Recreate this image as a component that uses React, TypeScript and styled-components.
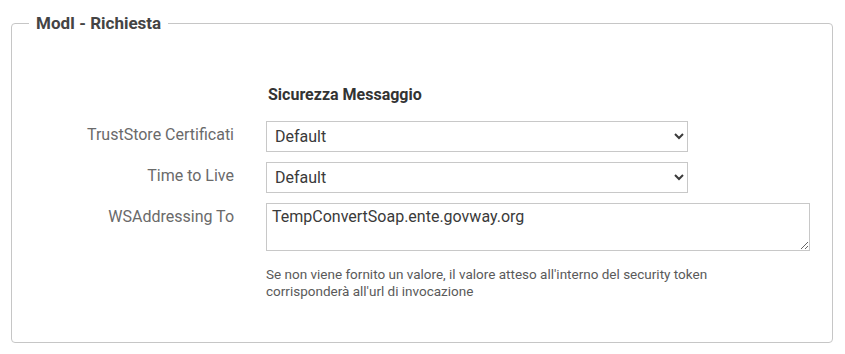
import React from "react";
import styled, { createGlobalStyle } from "styled-components";

const Global = createGlobalStyle`
  html, body { margin: 0; padding: 0; background: #fff; }
  body { font-family: Roboto, "Noto Sans", Arial, sans-serif; }
`;

const Page = styled.div`
  padding: 14px 12px 0 11px;
  width: 822px;
`;

const Fieldset = styled.fieldset`
  margin: 0;
  border: 1px solid #c6c6c6;
  border-radius: 4px;
  padding: 0 0 42px 0;
  min-width: 0;
`;

const Legend = styled.legend`
  margin-left: 17px;
  padding: 0 7px;
  font-size: 17px;
  font-weight: 700;
  color: #444;
  line-height: 18px;
`;

const Grid = styled.div`
  display: grid;
  grid-template-columns: 222px 1fr;
  column-gap: 32px;
  row-gap: 10px;
  padding-top: 54px;
  padding-right: 22px;
`;

const SectionTitle = styled.div`
  grid-column: 2;
  font-size: 16px;
  font-weight: 700;
  color: #333;
  padding-left: 2px;
  margin-bottom: 7px;
  line-height: 18px;
`;

const Label = styled.label`
  grid-column: 1;
  text-align: right;
  font-size: 16px;
  color: #6a6a6a;
  line-height: 20px;
  padding-top: 4px;
`;

const Field = styled.div`
  grid-column: 2;
  display: flex;
  flex-direction: column;
`;

const Select = styled.select`
  width: 422px;
  height: 31px;
  box-sizing: border-box;
  border: 1px solid #c8c8c8;
  border-radius: 0;
  background: #fff;
  font-family: Roboto, Arial, sans-serif;
  font-size: 16px;
  color: #3a3a3a;
  padding: 0 4px;
  margin: 0;
  display: block;
`;

const TextArea = styled.textarea`
  width: 544px;
  height: 48px;
  box-sizing: border-box;
  border: 1px solid #c8c8c8;
  border-radius: 0;
  font-family: Roboto, Arial, sans-serif;
  font-size: 16px;
  color: #3a3a3a;
  padding: 3px 5px;
  line-height: 20px;
  margin: 0;
  display: block;
`;

const Hint = styled.div`
  margin-top: 15px;
  font-size: 13.5px;
  line-height: 17px;
  color: #5a5a5a;
  max-width: 480px;
`;

export default function App() {
  return (
    <Page>
      <Global />
      <Fieldset>
        <Legend>ModI - Richiesta</Legend>
        <Grid>
          <SectionTitle>Sicurezza Messaggio</SectionTitle>
          <Label>TrustStore Certificati</Label>
          <Field>
            <Select defaultValue="Default">
              <option>Default</option>
            </Select>
          </Field>
          <Label>Time to Live</Label>
          <Field>
            <Select defaultValue="Default">
              <option>Default</option>
            </Select>
          </Field>
          <Label>WSAddressing To</Label>
          <Field>
            <TextArea defaultValue="TempConvertSoap.ente.govway.org" />
            <Hint>
              Se non viene fornito un valore, il valore atteso all'interno del security token
              corrisponderà all'url di invocazione
            </Hint>
          </Field>
        </Grid>
      </Fieldset>
    </Page>
  );
}
